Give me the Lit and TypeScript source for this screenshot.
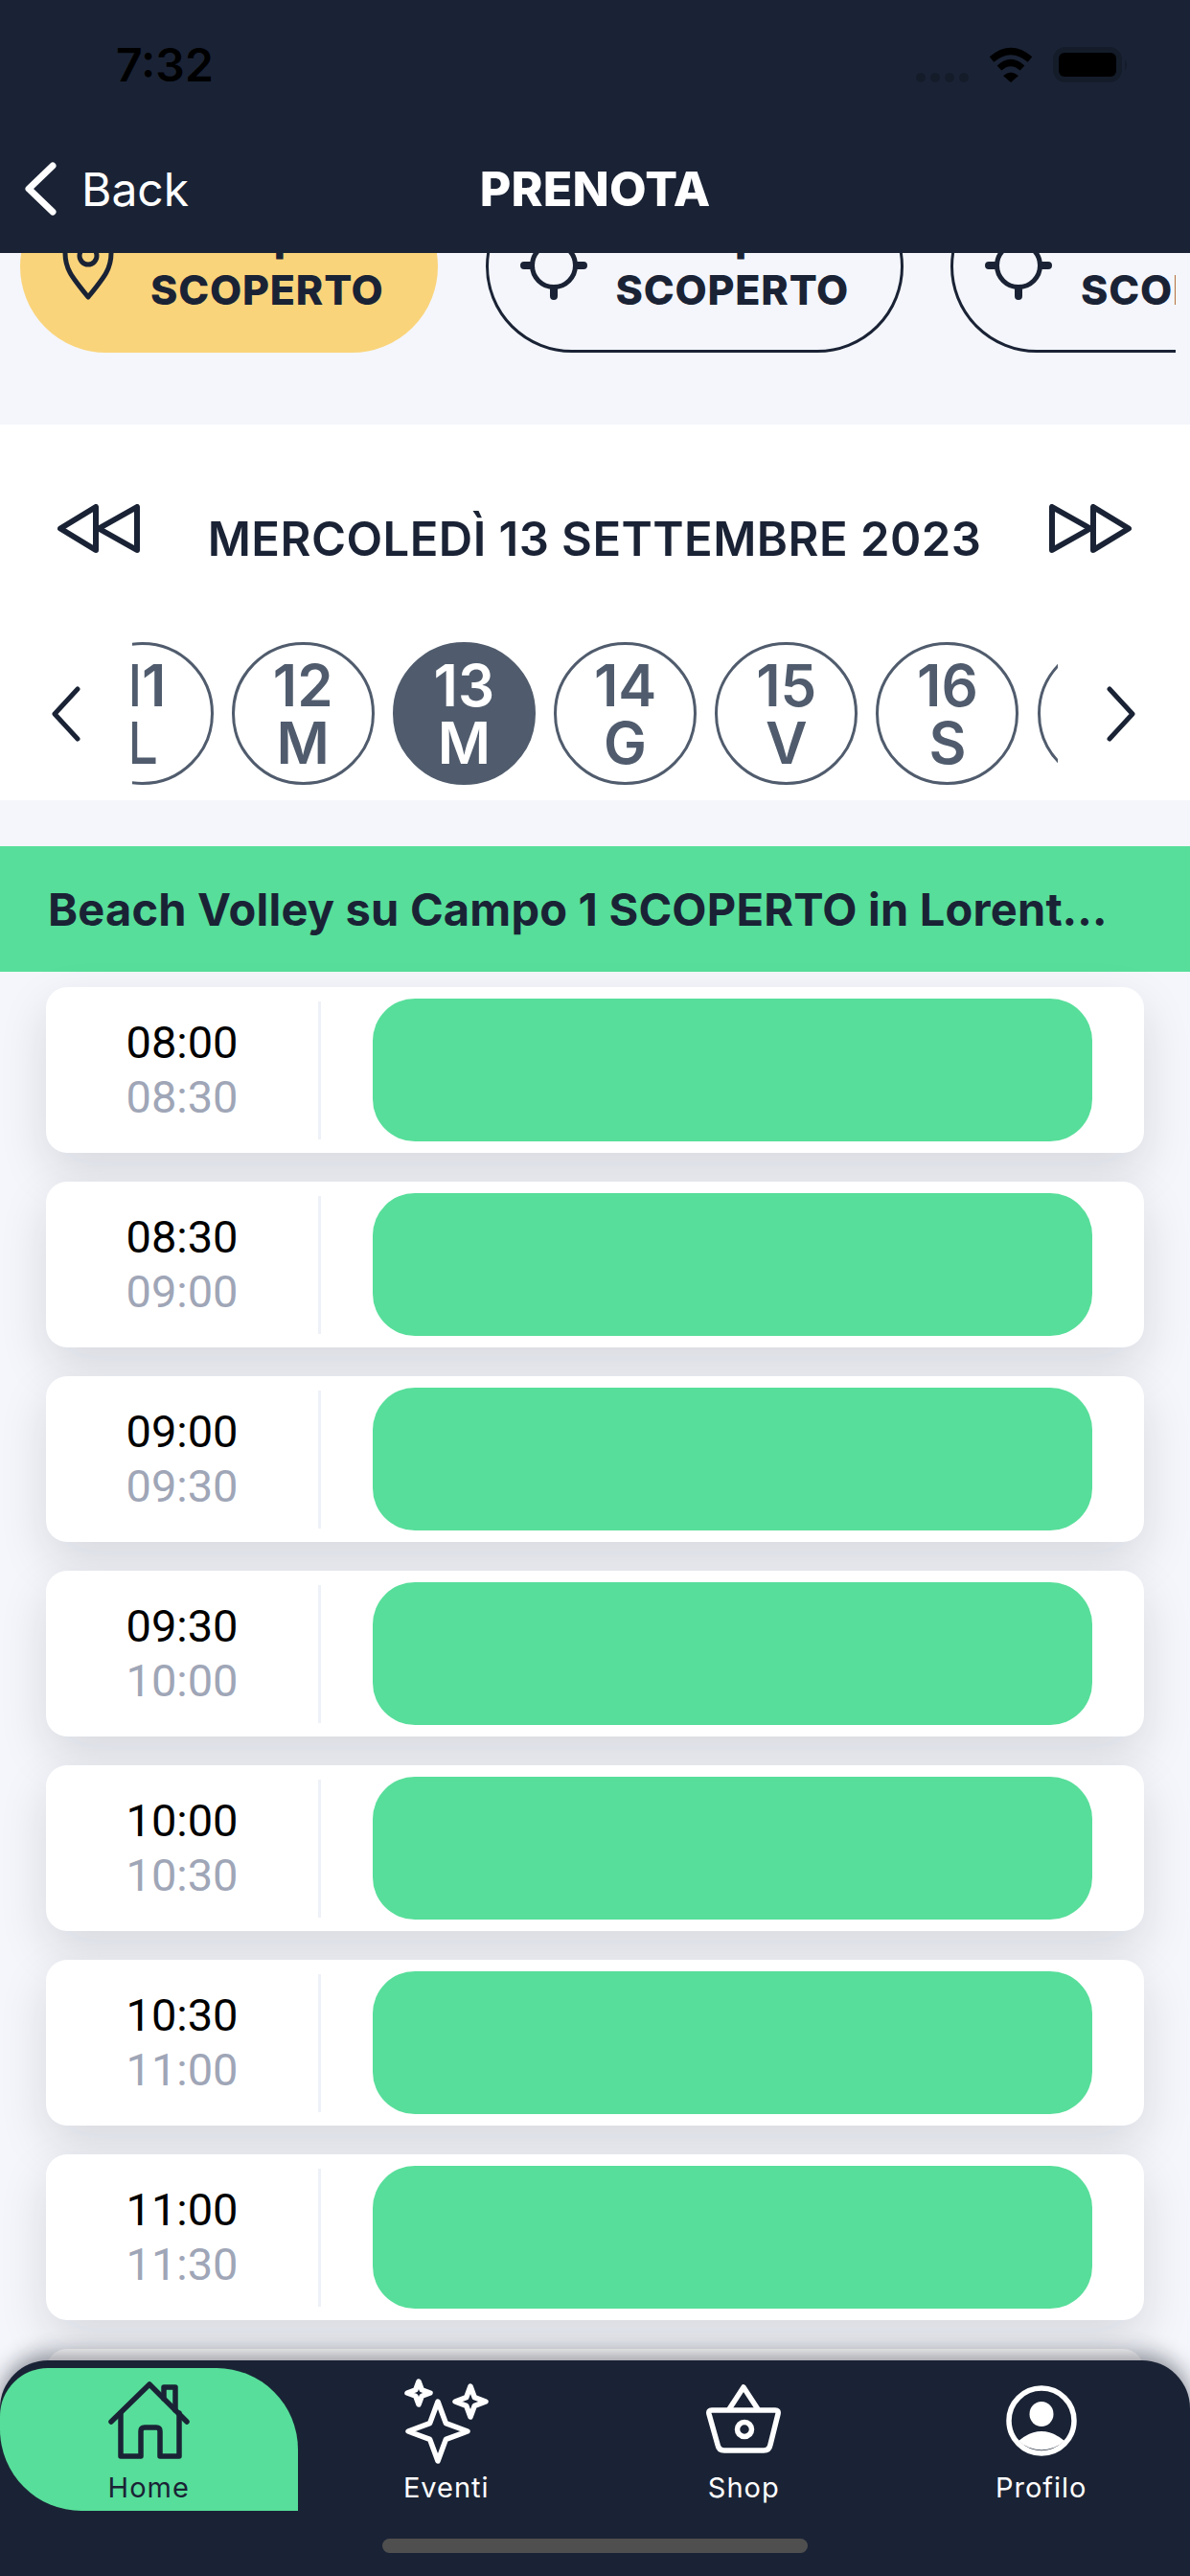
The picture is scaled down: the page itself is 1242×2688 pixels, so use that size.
import { LitElement, css, html, svg } from "lit";
import { customElement } from "lit/decorators.js";

const days = [
  { n: "11", d: "L" },
  { n: "12", d: "M" },
  { n: "13", d: "M", active: true },
  { n: "14", d: "G" },
  { n: "15", d: "V" },
  { n: "16", d: "S" },
  { n: "17", d: "D" },
];

const slots = [
  ["08:00", "08:30"],
  ["08:30", "09:00"],
  ["09:00", "09:30"],
  ["09:30", "10:00"],
  ["10:00", "10:30"],
  ["10:30", "11:00"],
  ["11:00", "11:30"],
  ["11:30", "12:00"],
];

// four pointed star, used three times in the Eventi icon
const star = (cx: number, cy: number, r: number) => {
  const k = r * 0.27;
  return `M${cx} ${cy - r}L${cx + k} ${cy - k}L${cx + r} ${cy}L${cx + k} ${cy + k}L${cx} ${cy + r}L${cx - k} ${cy + k}L${cx - r} ${cy}L${cx - k} ${cy - k}Z`;
};

const pinIcon = svg`
  <path d="M16 26C16 42 22 50 40 72C58 50 64 42 64 26C64 10 52 2 40 2C28 2 16 10 16 26Z" />
  <circle cx="40" cy="29" r="9" />
`;

const targetIcon = svg`
  <circle cx="40" cy="39" r="22.5" />
  <path class="thick" d="M9 39H15M65 39H71M40 64V71" />
`;

@customElement("app-root")
export class AppRoot extends LitElement {
  static styles = css`
    :host {
      display: flex;
      flex-direction: column;
      position: relative;
      width: 1242px;
      height: 2688px;
      overflow: hidden;
      background: #f4f6fb;
      font-family: Inter, "Liberation Sans", sans-serif;
      color: #1a2335;
    }

    header {
      position: relative;
      z-index: 2;
      flex: 0 0 264px;
      background: #1a2335;
    }

    .status {
      display: flex;
      align-items: center;
      justify-content: space-between;
      height: 37px;
      padding: 49px 64px 48px 121px;
    }

    .clock {
      font-size: 48px;
      font-weight: 600;
      line-height: 37px;
      color: #000;
    }

    .status-icons {
      display: flex;
      align-items: flex-end;
      gap: 20px;
    }

    .signal {
      display: flex;
      gap: 5px;
    }

    .signal i {
      width: 10px;
      height: 10px;
      border-radius: 50%;
      background: #141c2a;
    }

    .nav {
      display: grid;
      grid-template-columns: 1fr auto 1fr;
      align-items: center;
      height: 126px;
      color: #fff;
    }

    .back {
      display: flex;
      align-items: center;
      gap: 25px;
      padding-left: 24px;
      font-size: 48px;
      font-weight: 400;
    }

    .back svg {
      fill: none;
      stroke: #fff;
      stroke-width: 7;
      stroke-linecap: round;
      stroke-linejoin: round;
    }

    .page-title {
      font-size: 50px;
      font-weight: 800;
      letter-spacing: 0.2px;
    }

    main {
      flex: 1;
      min-height: 0;
      overflow: hidden;
    }

    .courts {
      display: flex;
      gap: 49.5px;
      width: 1206px;
      height: 180px;
      margin: -76px 0 75px;
      padding-left: 21px;
      overflow: hidden;
    }

    .court {
      flex: 0 0 436px;
      box-sizing: border-box;
      display: flex;
      align-items: center;
      gap: 25px;
      padding-left: 28px;
      border: 3px solid #1a2335;
      border-radius: 90px;
      font-size: 43px;
      font-weight: 800;
      letter-spacing: 0.8px;
      line-height: 56px;
      text-align: center;
    }

    .court.active {
      background: #fad47b;
      border-color: #fad47b;
    }

    .court svg {
      flex: none;
      fill: none;
      stroke: #1a2335;
      stroke-width: 5;
      stroke-linecap: round;
      stroke-linejoin: round;
      margin-top: 16px;
    }

    .court svg .thick {
      stroke-width: 8;
    }

    .court span {
      display: block;
      white-space: nowrap;
      padding-bottom: 8px;
    }

    .calendar {
      height: 392px;
      background: #fff;
      box-sizing: border-box;
      padding-top: 69px;
    }

    .date {
      display: flex;
      align-items: center;
      justify-content: space-between;
      height: 78px;
      padding: 0 61px 0 60px;
    }

    .date svg {
      fill: none;
      stroke: #1a2335;
      stroke-width: 6;
      stroke-linejoin: round;
    }

    .date svg.flip {
      transform: scaleX(-1);
    }

    .date span {
      padding-top: 22px;
      font-size: 49px;
      font-weight: 600;
      letter-spacing: 0.45px;
    }

    .days {
      display: flex;
      align-items: center;
      margin-top: 80px;
      padding-left: 54px;
    }

    .days svg {
      flex: none;
      fill: none;
      stroke: #1a2335;
      stroke-width: 5;
      stroke-linecap: round;
      stroke-linejoin: round;
    }

    .day-strip {
      flex: 0 0 966px;
      display: flex;
      gap: 19.2px;
      margin: 0 51px 0 54px;
      overflow: hidden;
    }

    .day {
      flex: 0 0 149px;
      box-sizing: border-box;
      display: flex;
      flex-direction: column;
      align-items: center;
      justify-content: center;
      height: 149px;
      border: 3px solid #505c6d;
      border-radius: 50%;
      font-size: 60px;
      font-weight: 600;
      line-height: 60px;
      color: #505c6d;
    }

    .day:first-child {
      margin-left: -64.5px;
    }

    .day.active {
      background: #505c6d;
      color: #fff;
    }

    .sport {
      display: flex;
      align-items: center;
      height: 131px;
      margin: 48px 0 16px;
      padding-left: 50px;
      background: #57de9a;
    }

    .sport span {
      width: 1110px;
      overflow: hidden;
      white-space: nowrap;
      text-overflow: ellipsis;
      font-size: 47px;
      font-weight: 700;
      letter-spacing: 0.2px;
    }

    .slots {
      display: flex;
      flex-direction: column;
      gap: 30px;
      margin: 0 48px;
    }

    .slot {
      display: flex;
      align-items: center;
      flex: 0 0 173px;
      background: #fff;
      border-radius: 22px;
      box-shadow: 0 20px 50px rgba(20, 20, 35, 0.13);
    }

    .times {
      flex: 0 0 284px;
      display: flex;
      flex-direction: column;
      align-items: center;
      padding-bottom: 2px;
      font-family: Roboto, sans-serif;
      font-size: 47px;
      line-height: 57px;
      color: #000;
    }

    .times em {
      font-style: normal;
      color: #9fa6b7;
    }

    .divider {
      flex: none;
      width: 3px;
      height: 144px;
      background: #eef1f7;
    }

    .free {
      flex: none;
      width: 751px;
      height: 149px;
      margin-left: 54px;
      background: #57de9a;
      border-radius: 44px;
    }

    nav {
      position: absolute;
      z-index: 3;
      left: 0;
      right: 0;
      bottom: 0;
      height: 225px;
      display: grid;
      grid-template-columns: repeat(4, 1fr);
      align-items: start;
      padding-top: 8px;
      box-sizing: border-box;
      background: #1a2335;
      border-radius: 50px 50px 0 0;
      box-shadow: 0 -6px 22px rgba(10, 14, 30, 0.45);
      color: #fff;
    }

    .tab {
      display: flex;
      flex-direction: column;
      align-items: center;
      height: 149px;
      padding-top: 10px;
      box-sizing: border-box;
      font-size: 29px;
      letter-spacing: 1px;
      line-height: 30px;
    }

    .tab.active {
      background: #57de9a;
      color: #1a2335;
      border-radius: 50px 85px 0 85px;
    }

    .tab span {
      margin-top: 10px;
    }

    .tab svg {
      fill: none;
      stroke: currentColor;
      stroke-width: 5.5;
      stroke-linecap: round;
      stroke-linejoin: round;
    }

    .tab svg .solid {
      fill: currentColor;
      stroke: none;
    }

    .home-bar {
      position: absolute;
      left: 399px;
      bottom: 24px;
      width: 444px;
      height: 15px;
      border-radius: 8px;
      background: #4f4f4f;
    }
  `;

  private court(active: boolean, clip = false) {
    return html`
      <div class="court ${active ? "active" : ""}">
        <svg width="80" height="96" viewBox="0 0 80 96">
          ${active ? pinIcon : targetIcon}
        </svg>
        <span>Campo ${clip ? "3" : active ? "1" : "2"}<br />SCOPERTO</span>
      </div>
    `;
  }

  protected override render() {
    return html`
      <header>
        <div class="status">
          <div class="clock">7:32</div>
          <div class="status-icons">
            <div class="signal"><i></i><i></i><i></i><i></i></div>
            <svg width="48" height="37" viewBox="0 0 48 37">
              <path d="M4 13Q24 -4 44 13" fill="none" stroke="#000" stroke-width="7" />
              <path d="M12 22Q24 11 36 22" fill="none" stroke="#000" stroke-width="7" />
              <path d="M16 30Q24 23 32 30L24 37Z" fill="#000" />
            </svg>
            <svg width="79" height="37" viewBox="0 0 79 37">
              <rect x="3" y="3" width="66" height="31" rx="10" fill="none" stroke="#141c2a" stroke-width="6" />
              <rect x="6" y="6" width="60" height="25" rx="6" fill="#000" />
              <path d="M75 13Q79 18 75 25Z" fill="#141c2a" />
            </svg>
          </div>
        </div>
        <div class="nav">
          <div class="back">
            <svg width="36" height="60" viewBox="0 0 36 60"><path d="M31 6L6 30L31 54" /></svg>
            Back
          </div>
          <div class="page-title">PRENOTA</div>
        </div>
      </header>
      <main>
        <div class="courts">
          ${this.court(true)} ${this.court(false)} ${this.court(false, true)}
        </div>
        <section class="calendar">
          <div class="date">
            <svg width="86" height="51" viewBox="0 0 86 51">
              <path d="M3 25.5L40 3V48Z" /><path d="M43 25.5L83 3V48Z" />
            </svg>
            <span>MERCOLEDÌ 13 SETTEMBRE 2023</span>
            <svg class="flip" width="86" height="51" viewBox="0 0 86 51">
              <path d="M3 25.5L40 3V48Z" /><path d="M43 25.5L83 3V48Z" />
            </svg>
          </div>
          <div class="days">
            <svg width="30" height="58" viewBox="0 0 30 58"><path d="M27 3L3 29L27 55" /></svg>
            <div class="day-strip">
              ${days.map(
                (d) => html`<div class="day ${d.active ? "active" : ""}">
                  <div>${d.n}</div>
                  <div>${d.d}</div>
                </div>`
              )}
            </div>
            <svg width="30" height="58" viewBox="0 0 30 58"><path d="M3 3L27 29L3 55" /></svg>
          </div>
        </section>
        <div class="sport"><span>Beach Volley su Campo 1 SCOPERTO in Lorenteggio Sport</span></div>
        <div class="slots">
          ${slots.map(
            ([from, to]) => html`<div class="slot">
              <div class="times">
                <div>${from}</div>
                <em>${to}</em>
              </div>
              <div class="divider"></div>
              <div class="free"></div>
            </div>`
          )}
        </div>
      </main>
      <nav>
        <div class="tab active">
          <svg width="100" height="90" viewBox="0 0 100 90">
            <path d="M11 46L51 7L90 46" />
            <path d="M21 37V82H42V56Q42 52 46 52H58Q62 52 62 56V82H82V37" />
            <path d="M66 22V10H78V34" />
          </svg>
          <span>Home</span>
        </div>
        <div class="tab">
          <svg width="100" height="90" viewBox="0 0 100 90">
            <path d="${star(41, 56, 31)}" />
            <path d="${star(21, 16, 12)}" />
            <path d="${star(75, 25, 16)}" />
          </svg>
          <span>Eventi</span>
        </div>
        <div class="tab">
          <svg width="100" height="90" viewBox="0 0 100 90">
            <path d="M35 33L50 10L65 33" />
            <path d="M17 34H83Q87 34 86 38L78 70Q77 76 71 76H30Q24 76 23 70L14 38Q13 34 17 34Z" />
            <circle cx="51" cy="54" r="7.5" />
          </svg>
          <span>Shop</span>
        </div>
        <div class="tab">
          <svg width="100" height="90" viewBox="0 0 100 90">
            <circle cx="50" cy="45" r="34" />
            <ellipse class="solid" cx="50" cy="38" rx="12.5" ry="13" />
            <path class="solid" d="M26 66Q50 46 74 66A35 35 0 0 1 26 66Z" />
          </svg>
          <span>Profilo</span>
        </div>
        <div class="home-bar"></div>
      </nav>
    `;
  }
}
